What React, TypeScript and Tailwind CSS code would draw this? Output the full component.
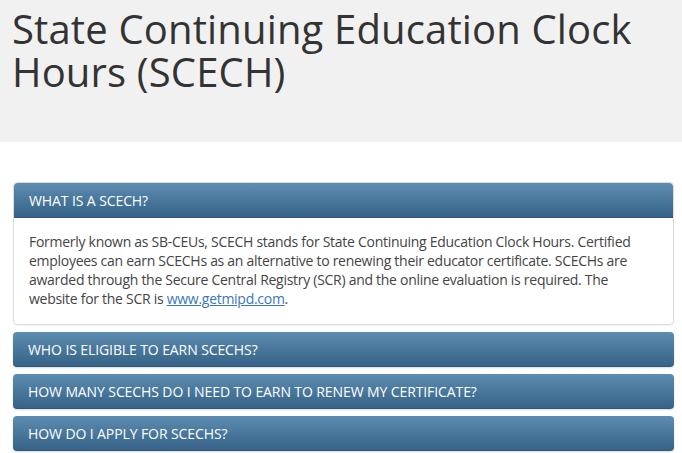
const panels = [
  "WHO IS ELIGIBLE TO EARN SCECHS?",
  "HOW MANY SCECHS DO I NEED TO EARN TO RENEW MY CERTIFICATE?",
  "HOW DO I APPLY FOR SCECHS?",
];

function PanelHeading({ title, open }: { title: string; open?: boolean }) {
  return (
    <div
      className={`h-[35px] flex items-center px-[15px] text-white text-[14px] tracking-[-0.1px] bg-gradient-to-b from-[#5d8db1] to-[#366387] border-b border-[#2e5778] ${
        open ? "rounded-t-[4px]" : "rounded-[4px]"
      }`}
    >
      {title}
    </div>
  );
}

export default function App() {
  return (
    <div className="w-full h-screen overflow-hidden bg-white font-['Open_Sans',sans-serif] text-[#333]">
      <header className="bg-[#f1f1f1] h-[142px] px-[12px] pt-[7px]">
        <h1 className="text-[40px] leading-[43px] tracking-[0.15px] text-[#333]">
          State Continuing Education Clock Hours (SCECH)
        </h1>
      </header>
      <main className="px-[13px] pt-[40px] pr-[8px] flex flex-col gap-[7px]">
        <section className="rounded-[4px] border border-[#dcdcdc] shadow-[0_1px_1px_rgba(0,0,0,0.05)]">
          <PanelHeading title="WHAT IS A SCECH?" open />
          <p className="px-[15px] pt-[14px] pb-[16px] text-[14px] leading-[19px] tracking-[-0.28px] text-[#444]">
            Formerly known as SB-CEUs, SCECH stands for State Continuing Education Clock Hours. Certified
            employees can earn SCECHs as an alternative to renewing their educator certificate. SCECHs are
            awarded through the Secure Central Registry (SCR) and the online evaluation is required. The
            website for the SCR is{" "}
            <a href="#" className="text-[#3a77b7] underline">
              www.getmipd.com
            </a>
            .
          </p>
        </section>
        {panels.map((p) => (
          <section key={p} className="rounded-[4px] shadow-[0_1px_2px_rgba(0,0,0,0.15)]">
            <PanelHeading title={p} />
          </section>
        ))}
      </main>
    </div>
  );
}
